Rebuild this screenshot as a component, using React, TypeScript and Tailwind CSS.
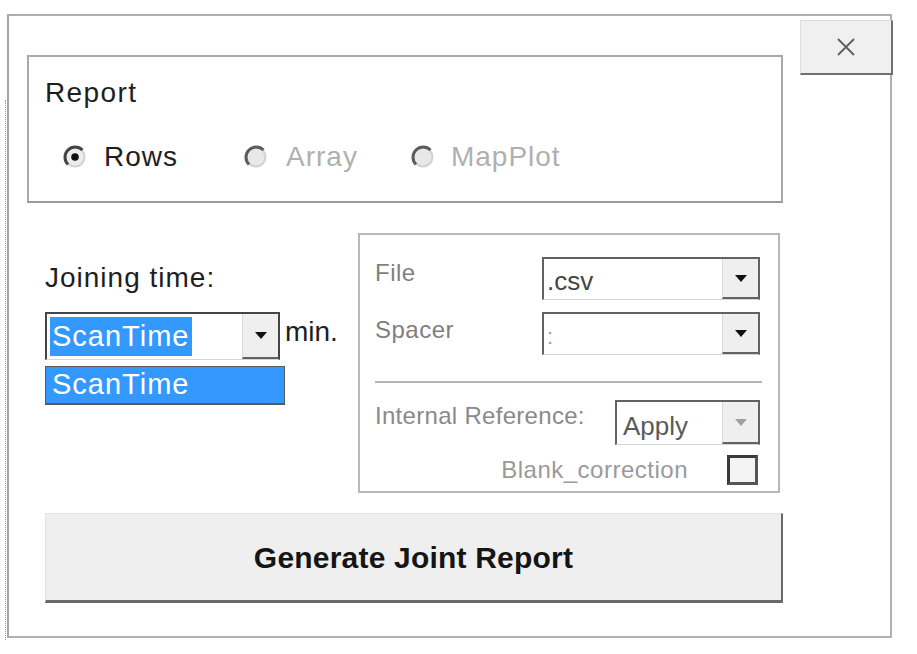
import React from "react"

const font = "font-['Liberation_Sans',Arial,sans-serif]"

function Arrow({ disabled = false }: { disabled?: boolean }) {
  return (
    <svg width="12" height="7" viewBox="0 0 12 7">
      <path d="M0 0 L12 0 L6 7 Z" fill={disabled ? "#a0a0a0" : "#111"} />
    </svg>
  )
}

function Radio({ checked = false, disabled = false }: { checked?: boolean; disabled?: boolean }) {
  return (
    <svg width="24" height="24" viewBox="0 0 24 24">
      <circle cx="12" cy="12" r="9.5" fill={disabled ? "#e8e8e8" : "#ececec"} stroke="#d2d2d2" strokeWidth="2" />
      <path
        d="M19.5 5 A10 10 0 1 0 5 19.5"
        fill="none"
        stroke={disabled ? "#5c5c5c" : "#444"}
        strokeWidth="3"
      />
      {checked && <circle cx="12" cy="12" r="3.8" fill="#111" />}
    </svg>
  )
}

function Combo({
  width,
  height,
  children,
  disabled = false,
  dark = false,
}: {
  width: string
  height: string
  children?: React.ReactNode
  disabled?: boolean
  dark?: boolean
}) {
  return (
    <div
      className={`flex shrink-0 ${width} ${height} bg-white border-t-2 border-l-2 border-r-2 border-b ${
        dark ? "border-[#454545]" : "border-[#626262]"
      } border-b-[#d6d6d6]`}
    >
      <div className="flex-1 flex items-center overflow-hidden">{children}</div>
      <div className="w-[36px] bg-[#efefef] border-l border-[#dadada] border-b-2 border-b-[#626262] flex items-center justify-center">
        <Arrow disabled={disabled} />
      </div>
    </div>
  )
}

export default function App() {
  return (
    <div className={`w-[917px] h-[654px] bg-white flex items-start pt-[14px] ${font}`}>
      <div className="w-[1px] h-[540px] mt-[86px] ml-[5px] border-l border-dotted border-[#8a8ae0]" />
      <div className="ml-[1px] w-[885px] h-[624px] border-2 border-[#b0b0b0] border-l-[#a4a4a4]">
        {/* top row */}
        <div className="flex items-start">
          <div className="shrink-0 ml-[18px] mt-[39px] w-[756px] h-[148px] border-2 border-[#a9a9a9] border-b-[#9a9a9a] pl-[16px] pt-[22px]">
            <div className="text-[28px] leading-[28px] tracking-[1.4px] text-[#1e1e1e]">Report</div>
            <div className="flex items-center mt-[36px] ml-[18px] text-[28px] leading-[28px] tracking-[1px]">
              <Radio checked />
              <span className="ml-[17px] text-[#1e1e1e]">Rows</span>
              <span className="ml-[66px]">
                <Radio disabled />
              </span>
              <span className="ml-[18px] text-[#b0b0b0]">Array</span>
              <span className="ml-[53px]">
                <Radio disabled />
              </span>
              <span className="ml-[16px] text-[#b0b0b0]">MapPlot</span>
            </div>
          </div>
          <div className="shrink-0 ml-[17px] mt-[4px] w-[93px] h-[55px] bg-[#f0f0f0] border-t border-l border-[#dcdcdc] border-r-2 border-b-2 border-r-[#707070] border-b-[#707070] flex items-center justify-center">
            <svg width="20" height="18" viewBox="0 0 20 18">
              <path d="M2 1 L18 17 M18 1 L2 17" stroke="#5e5e5e" strokeWidth="1.8" fill="none" />
            </svg>
          </div>
        </div>

        {/* middle row */}
        <div className="flex items-start mt-[30px] ml-[36px]">
          <div className="w-[313px] shrink-0">
            <div className="mt-[31px] text-[28px] leading-[28px] tracking-[1px] text-[#1e1e1e]">Joining time:</div>
            <div className="flex items-start mt-[20px]">
              <Combo width="w-[235px]" height="h-[48px]" dark>
                <span className="ml-[3px] h-[39px] flex items-center bg-[#3399ff] text-white text-[29px] tracking-[1px] pl-[2px] pr-[3px]">
                  ScanTime
                </span>
              </Combo>
              <span className="ml-[5px] mt-[6px] text-[28px] leading-[28px] text-[#1e1e1e]">min.</span>
            </div>
            <div className="mt-[6px] w-[240px] h-[39px] bg-[#3399ff] border border-[#5a5a5a] border-b-2 flex items-center pl-[6px] text-white text-[29px] tracking-[1px]">
              ScanTime
            </div>
          </div>

          <div className="shrink-0 w-[422px] h-[260px] border-2 border-[#b8b8b8] pl-[15px] pr-[18px] pt-[22px]">
            <div className="flex justify-between items-start">
              <span className="text-[24px] leading-[24px] tracking-[0.5px] text-[#7f7f7f] mt-[4px]">File</span>
              <Combo width="w-[218px]" height="h-[43px]">
                <span className="ml-[3px] text-[26px] text-[#454545] mt-[4px]">.csv</span>
              </Combo>
            </div>
            <div className="flex justify-between items-start mt-[12px]">
              <span className="text-[24px] leading-[24px] tracking-[0.5px] text-[#7f7f7f] mt-[6px]">Spacer</span>
              <Combo width="w-[218px]" height="h-[43px]">
                <span className="ml-[3px] text-[22px] text-[#a0a0a0] mt-[4px]">:</span>
              </Combo>
            </div>
            <div className="mt-[26px] mr-[-2px] h-[2px] bg-[#b4b4b4]" />
            <div className="flex justify-between items-start mt-[17px]">
              <span className="text-[24px] leading-[24px] tracking-[0.3px] text-[#8a8a8a] mt-[4px]">Internal Reference:</span>
              <Combo width="w-[145px]" height="h-[45px]" disabled>
                <span className="ml-[6px] text-[26px] text-[#5a5a5a] mt-[6px]">Apply</span>
              </Combo>
            </div>
            <div className="flex justify-end items-center mt-[10px] mr-[2px]">
              <span className="text-[24px] leading-[24px] tracking-[0.5px] text-[#9a9a9a]">Blank_correction</span>
              <div className="ml-[39px] w-[31px] h-[30px] bg-[#f4f4f4] border-[3px] border-[#3a3a3a] border-r-[#555] border-b-[#555]" />
            </div>
          </div>
        </div>

        {/* generate button */}
        <div className="mt-[20px] ml-[36px] w-[738px] h-[90px] bg-[#efefef] border-t border-l border-[#e2e2e2] border-r-2 border-b-[3px] border-r-[#6a6a6a] border-b-[#6a6a6a] flex items-center justify-center">
          <span className="text-[30px] font-bold text-[#151515] tracking-[0.2px]">Generate Joint Report</span>
        </div>
      </div>
    </div>
  )
}
